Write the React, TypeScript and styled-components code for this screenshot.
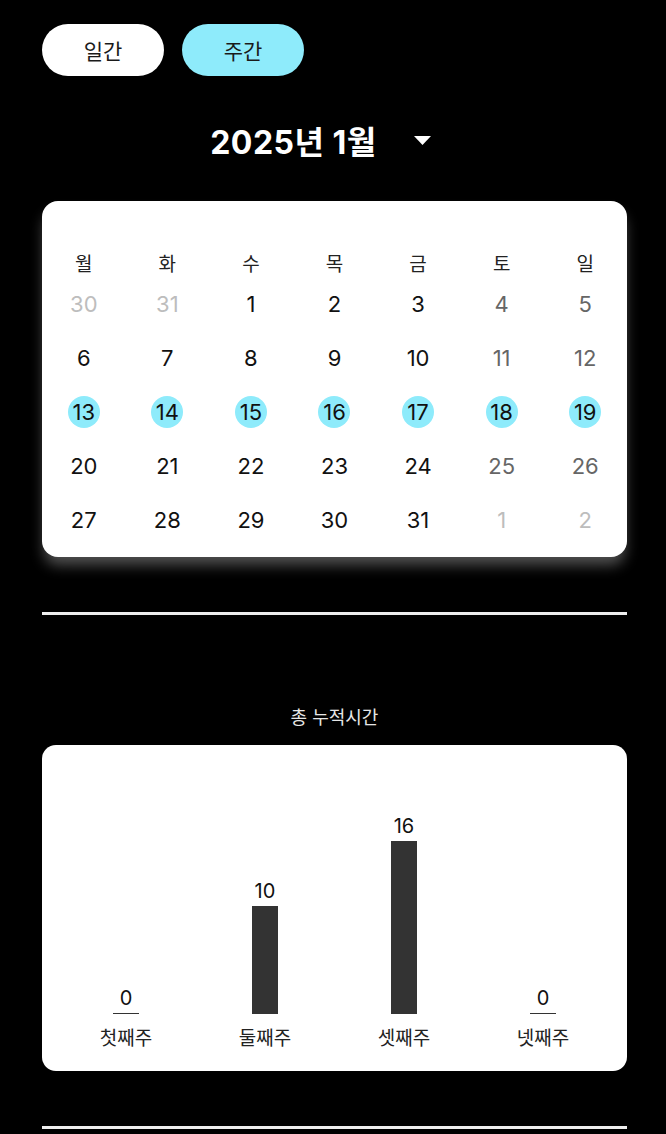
import React from "react";
import styled, { createGlobalStyle } from "styled-components";

const GlobalStyle = createGlobalStyle`
  html, body {
    margin: 0;
    padding: 0;
    background: #000;
  }
  body {
    font-family: Inter, "Noto Sans CJK KR", sans-serif;
  }
  #root {
    min-height: 1134px;
  }
`;

const Page = styled.div`
  display: flex;
  flex-direction: column;
  padding: 24px 39px 0 42px;
  min-height: 1134px;
  box-sizing: border-box;
  background: #000;
`;

const Tabs = styled.div`
  display: flex;
  gap: 18px;
`;

const TabButton = styled.button<{ $active?: boolean }>`
  width: 122px;
  height: 52px;
  border: none;
  border-radius: 26px;
  background: ${(p) => (p.$active ? "#8eebfb" : "#ffffff")};
  color: #1a1a1a;
  font-family: Roboto, "Noto Sans CJK KR", sans-serif;
  font-size: 21px;
  padding: 0;
  cursor: pointer;
`;

const TitleRow = styled.div`
  display: flex;
  align-items: center;
  justify-content: center;
  height: 48px;
  margin-top: 40px;
  padding-right: 28px;
  gap: 37px;
`;

const Title = styled.h1`
  margin: 0;
  color: #fff;
  font-size: 32px;
  font-weight: 700;
  letter-spacing: 0.5px;
  font-family: Inter, "Noto Sans CJK KR", sans-serif;
`;

const Card = styled.div`
  background: #fff;
  border-radius: 16px;
`;

const CalendarCard = styled(Card)`
  margin-top: 37px;
  padding: 52px 0 10px;
  box-shadow: 0 10px 14px -2px rgba(255, 255, 255, 0.32);
  display: grid;
  grid-template-columns: repeat(7, 1fr);
`;

const WeekdayCell = styled.div`
  height: 24px;
  line-height: 24px;
  text-align: center;
  font-size: 19px;
  color: #222;
  font-family: Roboto, "Noto Sans CJK KR", sans-serif;
`;

const DateCell = styled.div`
  height: 54px;
  display: flex;
  align-items: center;
  justify-content: center;
`;

type Tone = "normal" | "weekend" | "faded";

const DateNum = styled.span<{ $tone: Tone; $selected?: boolean }>`
  width: 32px;
  height: 32px;
  border-radius: 50%;
  display: flex;
  align-items: center;
  justify-content: center;
  font-size: 22px;
  background: ${(p) => (p.$selected ? "#8eebfb" : "transparent")};
  color: ${(p) =>
    p.$selected
      ? "#111"
      : p.$tone === "faded"
      ? "#bdbdbd"
      : p.$tone === "weekend"
      ? "#666"
      : "#111"};
`;

const Divider = styled.div`
  margin-top: 55px;
  height: 3px;
  background: #eeeeee;
`;

const SectionTitle = styled.div`
  margin-top: 91px;
  height: 24px;
  line-height: 24px;
  text-align: center;
  color: #e6e6e6;
  font-size: 18px;
`;

const ChartCard = styled(Card)`
  margin-top: 15px;
  height: 326px;
  border-radius: 14px;
  box-sizing: border-box;
  padding: 0 14.5px 20px;
  display: grid;
  grid-template-columns: repeat(4, 1fr);
  align-items: end;
`;

const BarColumn = styled.div`
  display: flex;
  flex-direction: column;
  align-items: center;
`;

const ValueLabel = styled.div`
  font-size: 20px;
  line-height: 24px;
  color: #111;
  margin-bottom: 3px;
`;

const Bar = styled.div`
  width: 26px;
  background: #333;
  min-height: 1.5px;
`;

const XLabel = styled.div`
  margin-top: 13px;
  font-size: 19px;
  line-height: 24px;
  color: #222;
`;

const weekdays = ["월", "화", "수", "목", "금", "토", "일"];

type Day = { n: number; tone: Tone; sel?: boolean };

const buildDays = (): Day[] => {
  const days: Day[] = [];
  days.push({ n: 30, tone: "faded" }, { n: 31, tone: "faded" });
  for (let d = 1; d <= 31; d++) {
    const idx = days.length % 7;
    const weekend = idx === 5 || idx === 6;
    days.push({ n: d, tone: weekend ? "weekend" : "normal", sel: d >= 13 && d <= 19 });
  }
  days.push({ n: 1, tone: "faded" }, { n: 2, tone: "faded" });
  return days;
};

const bars = [
  { label: "첫째주", value: 0 },
  { label: "둘째주", value: 10 },
  { label: "셋째주", value: 16 },
  { label: "넷째주", value: 0 },
];

export default function App() {
  const days = buildDays();
  return (
    <>
      <GlobalStyle />
      <Page>
        <Tabs>
          <TabButton>일간</TabButton>
          <TabButton $active>주간</TabButton>
        </Tabs>
        <TitleRow>
          <Title>2025년 1월</Title>
          <svg width="17" height="9" viewBox="0 0 17 9">
            <polygon points="0,0 17,0 8.5,9" fill="#fff" />
          </svg>
        </TitleRow>
        <CalendarCard>
          {weekdays.map((w) => (
            <WeekdayCell key={w}>{w}</WeekdayCell>
          ))}
          {days.map((d, i) => (
            <DateCell key={i}>
              <DateNum $tone={d.tone} $selected={d.sel}>
                {d.n}
              </DateNum>
            </DateCell>
          ))}
        </CalendarCard>
        <Divider />
        <SectionTitle>총 누적시간</SectionTitle>
        <ChartCard>
          {bars.map((b) => (
            <BarColumn key={b.label}>
              <ValueLabel>{b.value}</ValueLabel>
              <Bar style={{ height: `${b.value * 10.8}px` }} />
              <XLabel>{b.label}</XLabel>
            </BarColumn>
          ))}
        </ChartCard>
        <Divider />
      </Page>
    </>
  );
}
